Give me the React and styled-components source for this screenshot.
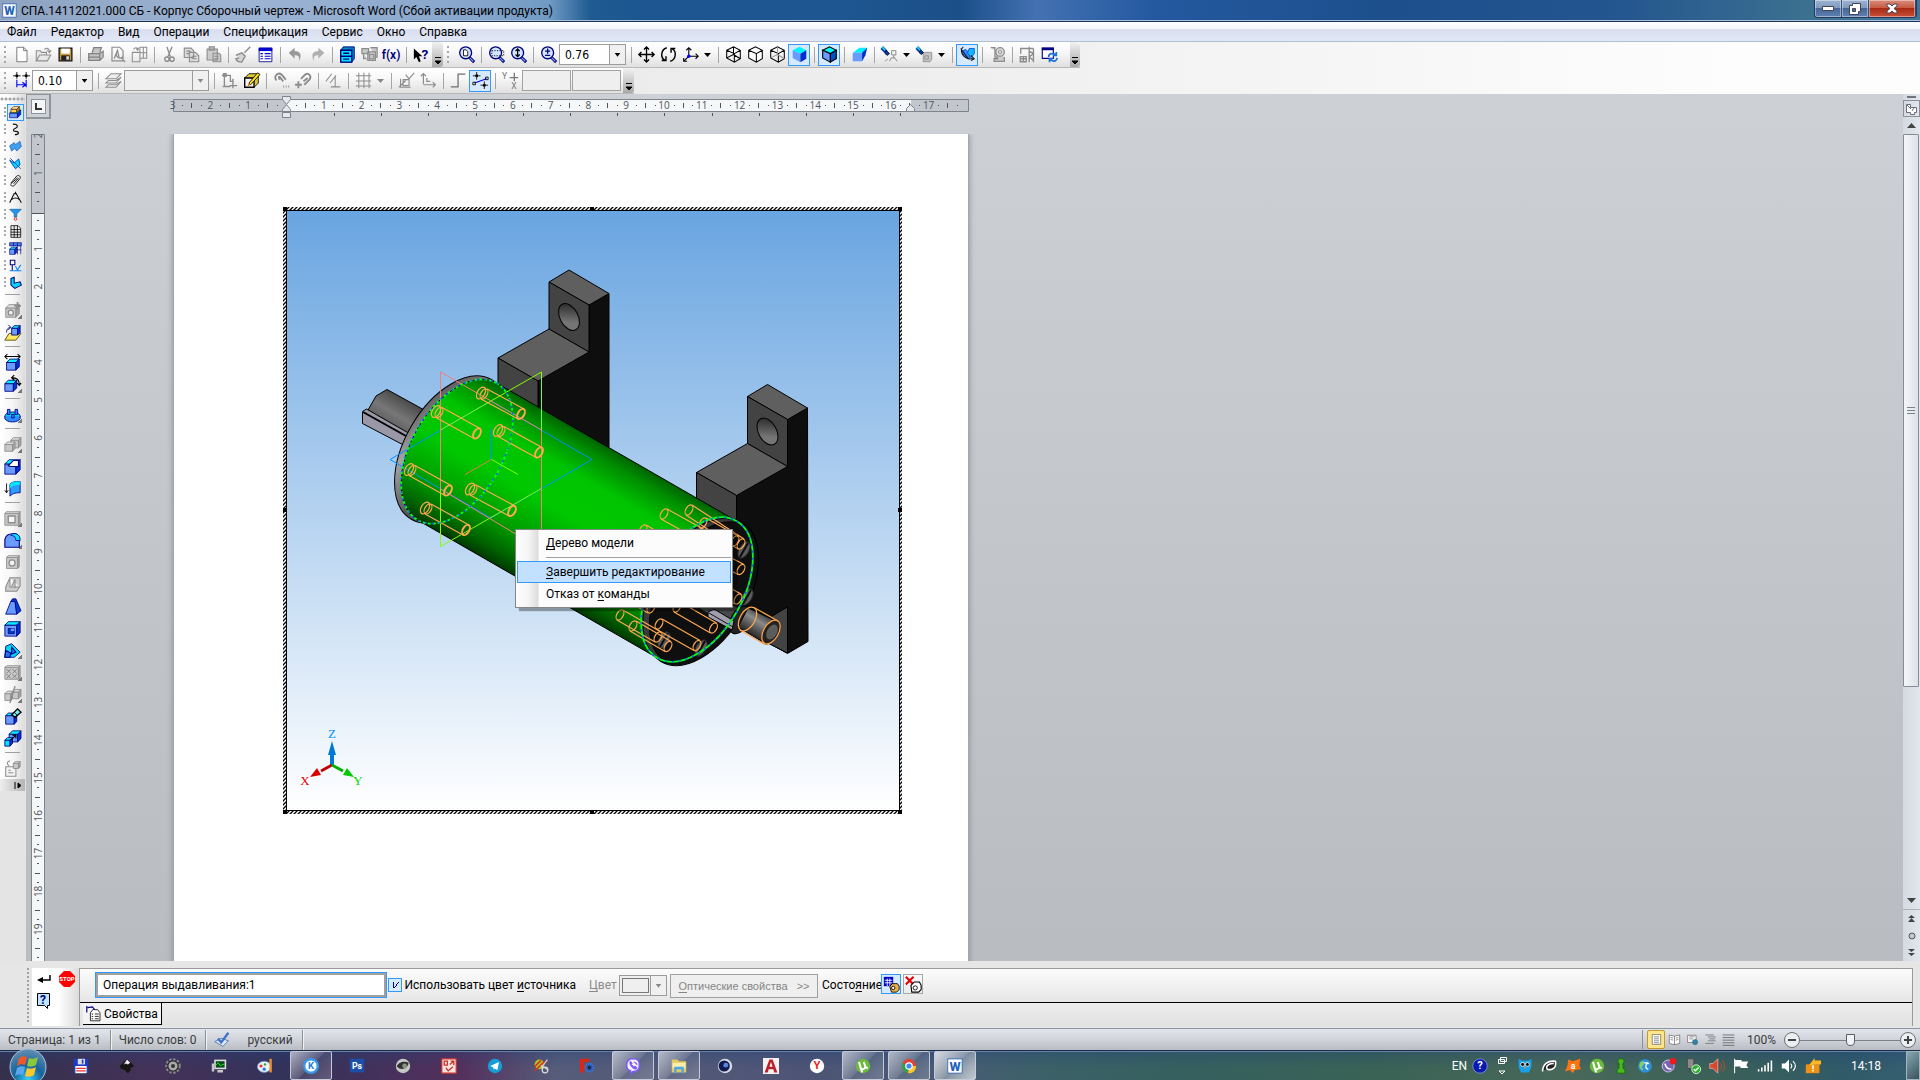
import React from "react";
import styled, { createGlobalStyle, css } from "styled-components";

const GlobalStyle = createGlobalStyle`
  * { box-sizing: border-box; }
  html, body { margin: 0; padding: 0; }
  body {
    font-family: Roboto, "Open Sans", "Noto Sans", sans-serif;
    font-size: 12px;
    color: #000;
    overflow: hidden;
  }
  button, input, select { font: inherit; color: inherit; margin: 0; padding: 0; }
  svg { display: block; flex: none; }
  u { text-underline-offset: 2px; text-decoration-skip-ink: none; }
`;

const Window = styled.div`
  display: flex;
  flex-direction: column;
  width: 100%;
  height: 100vh;
  overflow: hidden;
  background: #e4e4e4;
`;

const TitleBar = styled.header`
  display: flex;
  flex: none;
  align-items: flex-start;
  height: 22px;
  padding: 0 3px 0 2px;
  border-bottom: 1px solid #1d3558;
  box-shadow: inset 0 -1px #a9c0dc;
  background:
    linear-gradient(90deg, #8ea3c2 0, #9db4d4 250px, #86a5cb 480px, #6f9ac4 550px, #1f5b92 590px, transparent 640px),
    linear-gradient(90deg, #1a568f 0, #1d5690 44%, #1b4f88 50%, #4471b2 54%, #2459a0 60%, #1c4f8c 72%, #23558f 84%, #3c7090 94%, #41769a 100%);
`;
const Title = styled.h1`
  flex: 1;
  margin: 0 0 0 4px;
  font-size: 12px;
  font-weight: 400;
  line-height: 22px;
  white-space: nowrap;
`;
const TitleIcon = styled.div`
  padding-top: 3px;
`;
const WindowButtons = styled.div`
  display: flex;
  height: 18px;
  border: 1px solid #23395b;
  border-top: 0;
  border-radius: 0 0 4px 4px;
  overflow: hidden;
`;
const WindowButton = styled.button`
  display: flex;
  align-items: center;
  justify-content: center;
  width: ${(p) => (p.$close ? 47 : 27)}px;
  border: 0;
  border-right: 1px solid #334d75;
  box-shadow: inset 0 0 0 1px #ffffff66;
  background: ${(p) =>
    p.$close
      ? "linear-gradient(#d98d7c, #c75a43 45%, #a92a12 50%, #c8503a)"
      : "linear-gradient(#9db4d2, #7f9bc0 45%, #46669a 50%, #5f81b2)"};
`;

const MenuBar = styled.nav`
  display: flex;
  flex: none;
  align-items: center;
  height: 20px;
  border-bottom: 1px solid #b2bcd2;
  background: linear-gradient(#fff, #f3f5fa 35%, #d9dff0 40%, #e2e7f5);
`;
const MenuButton = styled.button`
  padding: 0 7px;
  border: 0;
  background: none;
  line-height: 18px;
`;

const ToolDock = styled.div`
  flex: none;
  height: 52px;
  background: linear-gradient(90deg, #e6e6e6, #efefef 50%, #fdfdfd 90%);
`;
const ToolLine = styled.div`
  display: flex;
  height: 26px;
`;
const ToolBar = styled.div`
  display: flex;
  align-items: center;
  height: 26px;
  border-bottom: 1px solid #b9b9b9;
  background: linear-gradient(#fff, #f8f8f8 40%, #e0e0e0);
`;
const Grip = styled.span`
  width: 12px;
  height: 18px;
  border-left: 4px solid transparent;
  background: repeating-linear-gradient(#a8a8a8 0 2px, transparent 2px 5px) 0 0 / 2px 18px no-repeat;
`;
const ShortGrip = styled(Grip)`
  width: 10px;
`;
const ToolButton = styled.button`
  display: flex;
  flex: none;
  align-items: center;
  justify-content: center;
  gap: 5px;
  width: ${(p) => (p.$drop ? 35 : 22)}px;
  height: 22px;
  border: 1px solid ${(p) => (p.$active ? "#3399ff" : "transparent")};
  background: ${(p) => (p.$active ? "#d6eaff" : "none")};
`;
const Divider = styled.span`
  flex: none;
  width: 8px;
  height: 16px;
  background: linear-gradient(#a5a5a5, #a5a5a5) 4px 0 / 1px 16px no-repeat;
`;
const Overflow = styled.button`
  display: flex;
  align-items: flex-end;
  justify-content: center;
  width: ${(p) => p.$w || 10}px;
  height: 25px;
  margin-left: ${(p) => p.$gap || 0}px;
  padding-bottom: 2px;
  border: 0;
  border-radius: 0 3px 3px 0;
  background: linear-gradient(#f2f2f2, #a8a8a8);
`;

const Combo = styled.span`
  display: grid;
  grid-template-columns: 1fr 16px;
  width: ${(p) => p.$w}px;
  height: 21px;
  margin: 0 1px 0 0;
  border: 1px solid #9c9c9c;
  background: ${(p) => (p.$off ? "#efefef" : "#fff")};
  color: ${(p) => (p.$off ? "#8a8a8a" : "#000")};
  svg {
    grid-area: 1 / 2;
    align-self: stretch;
    width: 16px;
    height: 19px;
    border-left: 1px solid #9c9c9c;
    background: #f0f0f0;
    pointer-events: none;
  }
`;
const ComboSelect = styled.select`
  grid-area: 1 / 1 / 2 / 3;
  appearance: none;
  width: 100%;
  padding-left: 5px;
  border: 0;
  background: none;
  font-family: "DejaVu Sans Condensed", "DejaVu Sans", sans-serif;
  font-size: 12px;
  &:disabled { opacity: 1; }
`;
const CoordInput = styled.input`
  width: 49px;
  height: 21px;
  margin-left: 1px;
  border: 1px solid #a2a2a2;
  background: #efefef;
`;

const Workspace = styled.div`
  display: flex;
  flex: 1;
  min-height: 0;
`;
const SideDock = styled.aside`
  width: 26px;
  flex: none;
  background: #e4e4e4;
`;
const SideBar = styled.div`
  width: 25px;
  padding-top: 10px;
  border-radius: 0 0 4px 0;
  background:
    radial-gradient(circle, #a8a8a8 1px, transparent 2px) 4px 3px / 4px 4px repeat-x,
    linear-gradient(90deg, #fff, #f6f6f6 50%, #dcdcdc);
`;
const SmallRow = styled.div`
  display: flex;
  align-items: center;
  height: 17px;
  padding-left: 4px;
`;
const DotGrip = styled.span`
  width: 3px;
  height: 12px;
  background: repeating-linear-gradient(#a8a8a8 0 2px, transparent 2px 4px) 0 0 / 2px 12px no-repeat;
`;
const SmallButton = styled.button`
  display: flex;
  align-items: center;
  justify-content: center;
  width: 17px;
  height: 17px;
  border: 1px solid ${(p) => (p.$active ? "#3399ff" : "transparent")};
  background: ${(p) => (p.$active ? "#d6eaff" : "none")};
`;
const LargeButton = styled.button`
  display: flex;
  align-items: center;
  justify-content: center;
  width: 25px;
  height: 22px;
  border: 0;
  background: ${(p) =>
    p.$more ? "linear-gradient(135deg, transparent 50%, #777 50%) 18px 16px / 4px 4px no-repeat" : "none"};
`;
const SideDivider = styled.div`
  height: 8px;
  margin: 0 5px;
  background: linear-gradient(#a0a0a0, #a0a0a0) 0 3px / 100% 1px no-repeat;
`;
const SideMore = styled.button`
  display: flex;
  align-items: center;
  justify-content: flex-end;
  width: 25px;
  height: 12px;
  padding-right: 3px;
  border: 0;
  background: linear-gradient(90deg, #eee, #b4b4b4);
`;

const Document = styled.main`
  display: grid;
  flex: 1;
  grid-template-columns: 25px 1fr;
  grid-template-rows: 40px 1fr;
  min-width: 0;
  overflow: hidden;
  background: linear-gradient(#cdd0d5, #b9bcc1);
`;
const TabWell = styled.button`
  align-self: start;
  display: flex;
  align-items: center;
  justify-content: center;
  width: 25px;
  height: 25px;
  border: 2px solid #8f939a;
  border-left-width: 1px;
  border-top-width: 1px;
  background: #cdd1d6;
`;
const TabStop = styled.span`
  display: flex;
  align-items: center;
  justify-content: center;
  width: 15px;
  height: 15px;
  border: 1px solid #8f939a;
  background: #f4f6f8;
`;
const TopRuler = styled.div`
  padding: 2px 0 0 115px;
`;
const LeftRuler = styled.div`
  padding-left: 5px;
  overflow: hidden;
`;
const PageHolder = styled.div`
  padding-left: 122px;
  overflow: hidden;
`;
const Page = styled.article`
  width: 796px;
  height: 1124px;
  padding: 73px 0 0 109px;
  border: 1px solid #a2a6ad;
  border-width: 0 1px;
  background: #fff;
  box-shadow: 0 0 6px #8a8e95;
`;
const ModelFrame = styled.div`
  position: relative;
  width: 619px;
  height: 607px;
`;

const ContextMenu = styled.ul`
  position: absolute;
  left: 232px;
  top: 322px;
  width: 218px;
  margin: 0;
  padding: 2px 1px;
  list-style: none;
  border: 1px solid #868686;
  background: linear-gradient(90deg, #fcfcfc, #f6f6f6 12px, #dcdcdc 22px, #fcfcfc 23px);
  box-shadow: 4px 3px 1px #00000055;
`;
const ContextButton = styled.button`
  display: block;
  width: 100%;
  height: 22px;
  padding-left: 28px;
  text-align: left;
  border: 1px solid ${(p) => (p.$active ? "#3399ff" : "transparent")};
  background: ${(p) => (p.$active ? "#c2e0ff" : "none")};
`;
const ContextLine = styled.li`
  height: 7px;
  margin-left: 29px;
  background: linear-gradient(#a0a0a0, #a0a0a0) 0 3px / 100% 1px no-repeat;
`;

const ScrollBar = styled.div`
  display: flex;
  flex: none;
  flex-direction: column;
  align-items: stretch;
  width: 17px;
  background: linear-gradient(90deg, #d5d9e0, #e2e6ee);
`;
const ScrollButton = styled.button`
  display: flex;
  align-items: center;
  justify-content: center;
  height: ${(p) => p.$h || 17}px;
  border: ${(p) => (p.$framed ? "1px solid #8b919b" : "0")};
  background: none;
`;
const Splitter = styled.div`
  height: 6px;
  background: linear-gradient(#70757d, #70757d) 4px 2px / 9px 2px no-repeat;
`;
const ScrollTrack = styled.div`
  flex: 1;
`;
const ScrollThumb = styled.div`
  display: flex;
  align-items: center;
  justify-content: center;
  height: 73%;
  width: 16px;
  border: 1px solid #868c96;
  border-radius: 1px;
  background: linear-gradient(90deg, #f4f6f9, #dde1e8);
`;
const BrowseGroup = styled.div`
  display: flex;
  flex-direction: column;
  border-top: 1px solid #adb2bb;
`;

const PropertyDock = styled.section`
  display: flex;
  flex: none;
  height: 67px;
  padding: 7px 7px 2px 27px;
  background: #e6e6e6;
`;
const PropertyGrip = styled.span`
  width: 5px;
  height: 55px;
  background: repeating-linear-gradient(#a0a0a0 0 2px, transparent 2px 4px) 0 0 / 2px 54px no-repeat;
`;
const PropertyActions = styled.div`
  display: grid;
  grid-template-columns: 23px 23px;
  grid-template-rows: 22px 22px;
  align-content: start;
  width: 47px;
  background: linear-gradient(90deg, #fff 55%, #dcdcdc);
`;
const BareButton = styled.button`
  display: flex;
  align-items: center;
  justify-content: center;
  border: 0;
  background: none;
`;
const PropertyPanel = styled.div`
  display: flex;
  flex: 1;
  flex-direction: column;
  border: 1px solid #9a9a9a;
  border-width: 1px 1px 0 1px;
  background: linear-gradient(#fcfcfc, #e2e2e2);
`;
const PropertyForm = styled.form`
  display: flex;
  align-items: flex-start;
  height: 34px;
  padding: 4px 0 0 16px;
  border-bottom: 1px solid #000;
  background: linear-gradient(#fcfcfc, #e6e6e6);
`;
const NameInput = styled.input`
  width: 290px;
  height: 24px;
  padding-left: 5px;
  border: 2px solid #a0a0a0;
  outline: 1px solid #3399ff;
  background: #fff;
`;
const CheckLabel = styled.label`
  display: flex;
  align-items: center;
  gap: 3px;
  width: 188px;
  height: 24px;
  margin-left: 2px;
  white-space: nowrap;
`;
const Check = styled.input`
  appearance: none;
  width: 14px;
  height: 14px;
  border: 1px solid #3399ff;
  background: #d6eaff;
  &:checked {
    background:
      linear-gradient(125deg, transparent 46%, #00008b 46% 54%, transparent 54%) 5px 2px / 5px 8px no-repeat,
      linear-gradient(#00008b, #00008b) 4px 3px / 1px 6px no-repeat,
      #d6eaff;
  }
`;
const ColorLabel = styled.label`
  display: flex;
  align-items: center;
  justify-content: space-between;
  width: 79px;
  height: 24px;
  margin-left: 13px;
  color: #8a8a8a;
`;
const ColorCombo = styled(Combo)`
  background: linear-gradient(#777, #777) 2px 2px / 27px 15px no-repeat,
    #efefef;
  select {
    margin: 3px 0 0 3px;
    width: 25px;
    height: 13px;
    background: #efefef;
  }
`;
const OpticsButton = styled.button`
  height: 24px;
  width: 148px;
  margin: 1px 4px 0 2px;
  border: 1px solid #a0a0a0;
  background: #efefef;
  color: #858585;
  font-size: 11px;
  font-family: "Liberation Sans", Arial, sans-serif;
  white-space: pre;
`;
const StateLabel = styled.span`
  width: 59px;
  line-height: 24px;
`;
const StateButton = styled(ToolButton)`
  width: 20px;
  height: 20px;
  margin: 1px 2px 0 0;
  border-color: ${(p) => (p.$active ? "#3399ff" : "#a8a8a8")};
`;
const PropertyTab = styled.button`
  display: flex;
  align-items: center;
  gap: 2px;
  width: 79px;
  height: 22px;
  margin-left: 3px;
  padding-left: 3px;
  border: 0;
  border-right: 1px solid #000;
  border-bottom: 1px solid #000;
  background: #f4f4f4;
`;

const StatusBar = styled.footer`
  display: flex;
  flex: none;
  align-items: center;
  height: 22px;
  border-top: 1px solid #8a94a3;
  background: linear-gradient(#e2e5ea, #d0d4da 50%, #b9bdc3);
  color: #3b3b3b;
`;
const StatusItem = styled.span`
  display: flex;
  align-items: center;
  height: 20px;
  gap: 17px;
  padding: 0 9px 0 8px;
  border-right: 1px solid #8b9097;
  box-shadow: 1px 0 #f2f3f5;
  white-space: nowrap;
`;
const ViewTools = styled.div`
  display: flex;
  align-items: center;
  margin-left: auto;
  padding: 0 4px 0 4px;
  border-left: 1px solid #8b9097;
`;
const ViewButton = styled.button`
  display: flex;
  align-items: center;
  justify-content: center;
  width: 18px;
  height: 19px;
  border: 1px solid ${(p) => (p.$active ? "#c29b29" : "transparent")};
  border-radius: 2px;
  background: ${(p) => (p.$active ? "#fde58c" : "none")};
`;
const ZoomText = styled.span`
  width: 45px;
  padding-right: 8px;
  margin-left: 2px;
  text-align: right;
`;
const RoundButton = styled.button`
  display: flex;
  align-items: center;
  justify-content: center;
  width: 16px;
  height: 16px;
  border: 1px solid #6a6f76;
  border-radius: 8px;
  background: #eceef1;
`;
const ZoomSlider = styled.input`
  appearance: none;
  width: 100px;
  height: 14px;
  background: linear-gradient(#7c828a, #7c828a) 0 7px / 100% 1px no-repeat;
  &::-webkit-slider-thumb {
    appearance: none;
    width: 9px;
    height: 12px;
    border: 1px solid #5a6068;
    border-radius: 1px 1px 5px 5px;
    background: #f2f3f5;
  }
`;

const TaskBar = styled.div`
  display: flex;
  flex: none;
  align-items: center;
  height: 30px;
  border-top: 1px solid #1c2c48;
  box-shadow: inset 0 1px #6580a8;
  background:
    linear-gradient(#1f3f7855, transparent 60%),
    linear-gradient(90deg, #34304c 0, #453258 8%, #33325a 15%, #54305c 24%, #565d7a 29%, #4d5475 42%, #475c74 50%, #3c6168 54%, #35605e 62%, #3a6355 72%, #48685a 82%, #3a6058 90%, #305a68 96%, #375f70 100%);
`;
const StartButton = styled.button`
  width: 60px;
  height: 36px;
  padding-left: 9px;
  border: 0;
  background: none;
`;
const TaskList = styled.div`
  display: flex;
  flex: 1;
  gap: 4px;
`;
const openTask = css`
  border-color: #c4cad8;
  background: linear-gradient(135deg, #ffffff99, #ffffff33 50%, #ffffff1a 52%, #ffffff33);
`;
const TaskButton = styled.button`
  display: flex;
  align-items: center;
  justify-content: center;
  width: 42px;
  height: 29px;
  border: 1px solid transparent;
  border-radius: 2px;
  background: none;
  ${(p) => p.$open && openTask}
  ${(p) => p.$front && "background: linear-gradient(135deg, #ffffffcc, #ffffff66 50%, #ffffff55 52%, #ffffffaa);"}
`;
const Tray = styled.div`
  display: flex;
  align-items: center;
  gap: 4px;
  color: #fff;
`;
const TrayText = styled.span`
  padding-right: ${(p) => (p.$clock ? 21 : 0)}px;
  padding-left: ${(p) => (p.$clock ? 24 : 0)}px;
  line-height: 26px;
`;
const TrayButton = styled(BareButton)`
  width: ${(p) => (p.$tight ? 18 : 20)}px;
  height: 24px;
`;
const ShowDesktop = styled.button`
  width: 14px;
  height: 29px;
  border: 1px solid #9fb6bd;
  background: linear-gradient(135deg, #8ba7b0, #35525e);
`;

/* ---------- icons ---------- */

const NAVY = "#000080";
const GREY = "#8c8c8c";
const blue = { f: "#6a9cff", t: "#00f0ff", s: "#0033d6", o: NAVY };
const dull = { f: "#c8c8c8", t: "#dcdcdc", s: "#a4a4a4", o: GREY };
const gold = { f: "#ffd24a", t: "#ffe9a0", s: "#d58a00", o: "#402000" };

function Box({ x, y, w, h, d = 4, c = blue }) {
  return (
    <g stroke={c.o} strokeLinejoin="round">
      <path fill={c.f} d={`M${x} ${y}h${w}v${h}h${-w}z`} />
      <path fill={c.t} d={`M${x} ${y}l${d} ${-d}h${w}l${-d} ${d}z`} />
      <path fill={c.s} d={`M${x + w} ${y}l${d} ${-d}v${h}l${-d} ${d}z`} />
    </g>
  );
}

function Lens({ children }) {
  return (
    <>
      <path d="M13 13l6 6" stroke={NAVY} strokeWidth="3.500" />
      <path d="M13 13l5 5" stroke="#8db4ff" strokeWidth="1.200" />
      <circle cx="9" cy="8" r="7" fill="#d4e6ff" stroke={NAVY} strokeWidth="1.600" />
      {children}
    </>
  );
}

const wire = "M2 5l8-4 8 4v10l-7 4-9-5z";
const wireTop = "M2 5l9 4v10M11 9l7-4";
const wireBack = "M10 1v9M10 10l8 5M10 10l-8 4";

const icons = {
  new: <path d="M4.500 1.500h8l4 4v13h-12zM12.500 1.500v4h4" fill="#fff" stroke="#666" />,
  open: <path d="M1.500 17.500v-12h5l1 2h6v3M1.500 17.500l4-7h13l-4 7zM11 4c3-3 6-1 6 3M14 5l3 3 2-3" fill="#e8e8e8" stroke={GREY} strokeWidth="1.200" />,
  save: (
    <>
      <path d="M2.500 2.500h15v15h-15z" fill="#c89a3c" stroke="#111" strokeWidth="1.500" />
      <path d="M5 3h10v6H5z" fill="#fff" />
      <path d="M5 11h10v6H5z" fill="#222" />
      <path d="M11 12h3v4h-3z" fill="#ddd" />
    </>
  ),
  print: <path d="M6 8l2-6h9l-2 6M2 9h13l4-3v7l-4 4H2zM2 13h13M15 9v8" fill="#c4c4c4" stroke="#808080" strokeWidth="1.400" />,
  preview: <path d="M3.500 1.500h9l4 4v12h-13zM6 15l4-10 2 9M9 9a4 4 0 108 2M15 14l4 5" fill="none" stroke={GREY} strokeWidth="1.400" />,
  sheets: <path d="M1.500 7.500h9v11h-9zM10.500 1.500h8v13h-8zM14.500 2v12M11 8h7M3 4c2-3 5-2 5 0M6 3l2 2 1-3" fill="none" stroke={GREY} strokeWidth="1.200" />,
  cut: <path d="M7 1l4 12M13 1L8 13M7 13a2.500 2.500 0 100 5 2.500 2.500 0 000-5M13 13a2.500 2.500 0 100 5 2.500 2.500 0 000-5" fill="none" stroke={GREY} strokeWidth="1.600" />,
  copy: <path d="M1.500 2.500h8l3 3v8h-11zM7.500 7.500h7l4 4v7h-11zM4 6h5M4 9h3M10 12h6M10 15h6" fill="#ddd" stroke={GREY} strokeWidth="1.300" />,
  paste: <path d="M2.500 3.500h12v13h-12zM5 1h6v4H5zM9.500 8.500h7l2 2v8h-9zM11 12h5M11 15h5" fill="#ccc" stroke={GREY} strokeWidth="1.300" />,
  brush: <path d="M18 1l-7 7M1 11l7-3 4 4-4 7c-3 0-6-1-7-4l4-1M8 8l4 4" fill="#d4d4d4" stroke={GREY} strokeWidth="1.600" />,
  list: (
    <>
      <path d="M2.500 2.500h15v16h-15z" fill="#fff" stroke={NAVY} />
      <path d="M2 2h16v4H2z" fill="#0000d0" />
      <path d="M4 9h3M9 9h7M4 12h3M9 12h7M4 15h3M9 15h7" stroke="#0000d0" strokeWidth="1.300" />
    </>
  ),
  undo: <path d="M2 8l7-6v4c7 0 9 5 5 12 1-6-1-7-5-7v4z" fill="#9a9a9a" />,
  redo: <path d="M18 8l-7-6v4c-7 0-9 5-5 12-1-6 1-7 5-7v4z" fill="#b0b0b0" />,
  cabinet: (
    <>
      <path d="M2 5l3-4h13v14l-3 4H2z" fill="#0080c0" stroke={NAVY} />
      <path d="M2 5h13v14H2zM2 12h13" fill="#00e5ff" stroke={NAVY} strokeWidth="1.600" />
      <path d="M5 8.500h7M5 15.500h7" stroke={NAVY} strokeWidth="1.600" />
    </>
  ),
  parts: <path d="M1 3h8v6H1zM3 9v6h4M8 7h9v10H8zM10 10h5v5h-5zM11 2h8v11h-2" fill="#c8c8c8" stroke={GREY} strokeWidth="1.400" />,
  help: (
    <>
      <path d="M1 3v13l3-3 3 6 2-1-2-6h4z" fill="#000" />
      <text x="10" y="15" fontSize="16" fontWeight="700" fill={NAVY}>?</text>
    </>
  ),
  zoomPage: <Lens><path d="M6.500 4.500h3l2 2v5h-5z" fill="#fff" stroke="#000" /></Lens>,
  zoomArea: <Lens><path d="M4.500 5.500h14v6h-14z" fill="none" stroke="#000" strokeDasharray="1.500 1.500" /></Lens>,
  zoomUp: <Lens><path d="M9 4v8M6.500 6L9 3.500 11.500 6M6.500 10L9 12.500l2.500-2.500" fill="none" stroke="#000" strokeWidth="1.500" /></Lens>,
  zoomIn: <Lens><path d="M9 3v6M6 6h6M6 11h6" stroke={NAVY} strokeWidth="1.500" /></Lens>,
  move: <path d="M10 1v18M1 10h18M7 4l3-3 3 3M7 16l3 3 3-3M4 7l-3 3 3 3M16 7l3 3-3 3" fill="none" stroke="#000" strokeWidth="1.600" />,
  rotate: <path d="M8 2c-7 2-8 12-2 15M2 17h5v-5M12 18c7-2 8-12 2-15M18 3h-5v5" fill="none" stroke="#000" strokeWidth="1.700" />,
  axes: (
    <>
      <path d="M8 12V2M5 5l3-3 3 3M8 12h11M16 9l3 3-3 3M8 12l-6 6M2 14v4h4" fill="none" stroke="#000" strokeWidth="1.300" />
      <circle cx="8" cy="12" r="2" fill="#00f" />
    </>
  ),
  wire1: <path d={wire + wireTop + wireBack} fill="none" stroke="#000" strokeWidth="1.200" />,
  wire2: <path d={wire + wireTop} fill="#fff" stroke="#000" strokeWidth="1.200" />,
  wire3: (
    <g fill="none" strokeWidth="1.200">
      <path d={wire + wireTop} stroke="#000" />
      <path d={wireBack} stroke="#999" />
    </g>
  ),
  solid: (
    <>
      <path d="M2 5l8-4 8 4-7 4z" fill="#00f6ff" />
      <path d="M2 5l9 4v10l-9-5z" fill="#6a9cff" />
      <path d="M11 9l7-4v10l-7 4z" fill="#0030d0" />
    </>
  ),
  solidEdge: (
    <g stroke="#000" strokeWidth="1.300">
      <path d="M2 5l8-4 8 4-7 4z" fill="#00f6ff" />
      <path d="M2 5l9 4v10l-9-5z" fill="#6a9cff" />
      <path d="M11 9l7-4v10l-7 4z" fill="#0050c0" />
    </g>
  ),
  wedge: (
    <>
      <path d="M2 8l8-6h9l-6 6z" fill="#00f0ff" />
      <path d="M2 8h11v10H2z" fill="#6a9cff" />
      <path d="M13 8l6-6-2 9-4 7z" fill="#0030d0" />
    </>
  ),
  torch: (
    <>
      <path d="M1 2l5 5" stroke="#003c9c" strokeWidth="4.500" />
      <path d="M6 5l4 4-3 2-2-2z" fill="#003c9c" stroke="#003" />
      <path d="M1 1l4 4" stroke="#22d3ff" strokeWidth="2" />
      <path d="M12.500 5.500h5v5h-5zM15 11v3M10 18l2-4h4l3 4M8 15l-3 3" fill="none" stroke="#777" />
    </>
  ),
  torch2: (
    <>
      <path d="M1 2l4 4" stroke="#003c9c" strokeWidth="4.500" />
      <path d="M5 4l4 4-3 2-2-2z" fill="#003c9c" stroke="#003" />
      <path d="M1 1l4 4" stroke="#22d3ff" strokeWidth="2" />
      <path d="M8.500 9.500l2-2h8v8l-2 3h-8zM10.500 11.500h4v4h-4z" fill="#c4c4c4" stroke={GREY} />
    </>
  ),
  section: (
    <>
      <path d="M3 6l5-2 5 5-1 6-5-2z" fill="#2d8cff" stroke="#0b4cc0" />
      <path d="M10 8l2-5h6v6l-4 5z" fill="#12b8ff" stroke="#0b4cc0" />
      <path d="M5 1c-7 6 4 18 12 13M2 3l9 12M14 11l4 4-4 2" fill="none" stroke="#111" strokeWidth="1.200" />
    </>
  ),
  measure: (
    <>
      <path d="M2 2h5v11h3v2H6v3h12v-5" fill="#ccc" stroke={GREY} strokeWidth="1.500" />
      <circle cx="13" cy="7" r="5" fill="#ddd" stroke={GREY} strokeWidth="1.500" />
      <circle cx="13" cy="7" r="2" fill="none" stroke={GREY} />
    </>
  ),
  crane: <path d="M2 9V3h15M12 1v18M17 3v16M12 6l5 3-5 4 5 4M1.500 12.500h7v6h-7zM5 13v5M2 15h6" fill="none" stroke={GREY} strokeWidth="1.600" />,
  refresh: (
    <>
      <path d="M1.500 2.500h13v12h-13z" fill="#fff" stroke={NAVY} strokeWidth="1.300" />
      <path d="M1 2h14v3H1z" fill={NAVY} />
      <path d="M9 13c0-5 6-5 9-2M18 7v4h-4M19 14c-1 5-6 5-9 1M10 19v-4h4" fill="none" stroke="#1d6fe0" strokeWidth="2" />
    </>
  ),
  step: (
    <>
      <path d="M4.500 9v9M15.500 9v9M5 15h10M11 12l4 3-4 3" fill="none" stroke="#00f" strokeWidth="1.300" />
      <path d="M4.500 0v8M0 4.500h9M15.500 0v8M11 4.500h9" stroke="#000" />
      <path d="M3 3h3v3H3zM14 3h3v3h-3z" />
    </>
  ),
  layers: <path d="M1 8l6-6h12l-6 6zM1 13l3-3h9l6-4-6 7zM1 18l3-3h9l6-4-6 7z" fill="#eee" stroke={GREY} strokeWidth="1.200" />,
  frame: <path d="M4 2v16M1 4h6M14 8v11M10 16h9M6 4h5v7h4M2 17h9M3 2h3v3H3z" fill="none" stroke={GREY} strokeWidth="1.600" />,
  cubePen: (
    <>
      <path d="M2 7l5-5h11v11l-5 5H2z" fill="#d9c63c" stroke="#000" />
      <path d="M2 7h11v11H2z" fill="#f4f4f4" stroke="#000" strokeWidth="1.600" />
      <path d="M7 13L17 1l3 2L9 15z" fill="#ffe000" stroke="#000" />
      <path d="M7 13l-2 4 4-2z" fill="#e06000" />
    </>
  ),
  magnet: <path d="M4 10C0 4 7-1 11 4l4 5M8 9C6 6 7 4 9 7l3 4M12 17h1M15 17h1M18 17h1" fill="none" stroke={GREY} strokeWidth="2.200" />,
  magnet2: <path d="M7 8l5-5c4-3 8 2 5 6l-6 6M10 11l5-4M4 11v8M0 15h8" fill="none" stroke={GREY} strokeWidth="2.200" />,
  parallel: <path d="M1 11l7-9M6 13l7-9M12 4v13M7 17.500h11" fill="none" stroke={GREY} strokeWidth="1.200" />,
  grid: <path d="M4.500 1v18M10.500 1v18M16.500 1v18M1 4.500h18M1 10.500h18M1 16.500h18" stroke={GREY} strokeWidth="1.200" />,
  sketchOk: <path d="M3 8v10h12M1 18l8-8M6 9h7v7H6zM9 3l4 5 6-7" fill="none" stroke={GREY} strokeWidth="1.300" />,
  lcs: <path d="M4 14V2M1 5l3-3 3 3M4 15h14M15 12l3 3-3 3M8 7v4h4" fill="none" stroke={GREY} strokeWidth="1.400" />,
  corner: <path d="M1 17.500h8.500v-15H18" fill="none" stroke="#707070" strokeWidth="1.500" />,
  snap: (
    <>
      <path d="M3 13l14-5" stroke="#00f" strokeWidth="1.300" />
      <path d="M5.500 0v9M1 4.500h9M14.500 11v9M10 15.500h9M1 12h3v3H1zM16 6h3v3h-3z" fill="none" stroke="#000" />
      <path d="M4 3h3v3H4zM13 14h3v3h-3z" />
    </>
  ),
  xy: (
    <>
      <text x="0" y="8" fontSize="10" fill="#777">Y</text>
      <text x="11" y="20" fontSize="10" fill="#777">X</text>
      <path d="M14.500 1v10M9 6.500h10" stroke="#777" strokeWidth="1.500" />
    </>
  ),
};

const sideSmall = [
  <><Box x={1} y={11} w={12} h={7} d={5} c={blue} /><Box x={3} y={5} w={9} h={5} d={4} c={gold} /></>,
  <path d="M6 2c7-1 9 4 4 6s-4 5 1 5 5 5-2 5" fill="none" stroke="#111" strokeWidth="1.800" />,
  <path d="M1 9l7-5 2 3 7-5 2 8-7 7-3-4-5 4z" fill="#3f9ff0" stroke="#1558b8" />,
  <path d="M1 5l7 4 7-6 2 9-7 6-5-7zM2 2l16 16" fill="#00d8ff" stroke="#0038b8" strokeWidth="1.300" />,
  <path d="M3 14L12 3c3-2 7 1 5 4L8 18c-4 2-7-1-4-4l9-8M7 15l8-9" fill="none" stroke="#222" strokeWidth="1.500" />,
  <path d="M10 1v3M8 4h3l8 14M8 4L1 18M4 13c4-3 8-3 12 0" fill="none" stroke="#111" strokeWidth="1.700" />,
  <><path d="M1 2h18l-7 7v5H8V9z" fill="#2196e8" stroke="#0b5ca8" /><circle cx="10" cy="17" r="2" fill="none" stroke="#e33" strokeWidth="1.500" /></>,
  <path d="M3 1h11l4 4v14H3zM3 7h15M3 11h15M3 15h15M8 1v18M13 1v18" fill="#eee" stroke="#000" strokeWidth="1.200" />,
  <><path d="M1 1h18v5H1zM7 1v5M13 1v18M18 6v13M8 12h11" fill="#4a7be0" stroke={NAVY} /><Box x={1} y={11} w={8} h={8} d={3} /></>,
  <><path d="M2 2h7v7H2zM5 9v9" fill="#fff" stroke="#000080" strokeWidth="1.600" /><path d="M1 18h18M10 11l3 6 5-8" fill="none" stroke="#0080ff" strokeWidth="1.600" /></>,
  <path d="M3 4l5-2v9l9-2 2 5-10 5-6-5z" fill="#00d8f0" stroke={NAVY} strokeWidth="1.600" />,
];

const sideLarge = [
  { id: "boxAdd", more: 1, art: <><Box x={2} y={7} w={12} h={11} c={dull} /><circle cx="8" cy="12.500" r="3" fill="#eee" stroke={GREY} strokeWidth="1.500" /><path d="M16 0v9M12 4.500h8" stroke={GREY} strokeWidth="2" /></> },
  { id: "sketch", art: <><path d="M1 19l5-8h14l-6 8z" fill="#ffe860" stroke="#4c4400" /><Box x={9} y={5} w={7} h={8} d={3} /><path d="M3 10c0-4 2-6 5-6M5 1l3 3-3 3" fill="none" stroke={NAVY} /></>, line: 1 },
  { id: "extrude", art: <><path d="M1 3h18M4 0L1 3l3 3M16 0l3 3-3 3" fill="none" stroke="#000" strokeWidth="1.200" /><Box x={3} y={10} w={11} h={9} /></> },
  { id: "revolve", more: 1, art: <><Box x={1} y={9} w={10} h={9} /><path d="M9 2c6 0 9 3 9 8M12-1L9 2l3 3M15 8l3 3 2-3" fill="none" stroke="#000" strokeWidth="1.400" /></>, line: 1 },
  { id: "flange", more: 1, art: <><ellipse cx="10" cy="12" rx="9" ry="5" fill="#00d0f0" stroke={NAVY} /><path d="M1 12v3c3 5 15 5 18 0v-3" fill="#2d8cff" stroke={NAVY} /><path d="M4 4h3v6H4zM13 4h3v6h-3zM9 10h3v4H9z" fill="#2d8cff" stroke={NAVY} /></>, line: 1 },
  { id: "union", more: 1, art: <><Box x={8} y={5} w={9} h={9} d={3} c={dull} /><Box x={1} y={10} w={9} h={8} d={3} c={dull} /></> },
  { id: "cutout", art: <><Box x={1} y={7} w={13} h={12} d={5} /><path d="M5 9l6-6h6v7H8z" fill="#fff" stroke={NAVY} strokeWidth="1.300" /></> },
  { id: "bend", art: <><path d="M7 5c4-4 8-3 12-3v13c-4 0-8 0-12 4z" fill="#2d9cff" stroke={NAVY} /><path d="M7 5c4-4 8-3 12-3v4c-4 0-8 0-12 4z" fill="#00e5ff" /><path d="M3 4v11M1 12l2 3 2-3" fill="none" stroke="#000" /></>, line: 1 },
  { id: "hole", more: 1, art: <><Box x={1} y={4} w={16} h={14} d={2} c={dull} /><path d="M5 7h8v8H5z" fill="#f4f4f4" stroke={GREY} strokeWidth="1.600" /></> },
  { id: "fillet", more: 1, art: <><path d="M1 18V9c1-5 5-7 9-7h3c4 1 5 4 5 7v9z" fill="#6a9cff" stroke={NAVY} strokeWidth="1.300" /><path d="M10 2h4c4 1 5 4 5 8h-5c0-4-2-6-6-6z" fill="#00e5ff" stroke={NAVY} /></> },
  { id: "round", art: <><Box x={3} y={4} w={13} h={13} d={2} c={dull} /><circle cx="9.500" cy="10.500" r="3.500" fill="#f4f4f4" stroke={GREY} strokeWidth="1.500" /></> },
  { id: "rib", art: <path d="M2 13l5-11h12v10l-4 6H2zM7 2v11h12M9 12l4-8v10" fill="#ccc" stroke={GREY} strokeWidth="1.200" /> },
  { id: "draft", art: <><path d="M2 19L8 4h5l2 15z" fill="#6a9cff" stroke={NAVY} /><path d="M8 4l2-3h4l6 14-5 4-2-15z" fill="#0040d0" stroke={NAVY} /></> },
  { id: "shell", art: <><Box x={1} y={6} w={14} h={13} /><path d="M5 10h7v6H5z" fill="#003cc8" stroke={NAVY} /><path d="M8 10h4v3H8z" fill="#6a9cff" /></> },
  { id: "plane", more: 1, art: <><path d="M2 5l7-3 10 10-7 6H1z" fill="#00d8f0" stroke={NAVY} /><path d="M2 10l6 3-1 5H1zM9 6l5 6-5 2z" fill="#2d6cf0" stroke={NAVY} strokeWidth="1.300" /></> },
  { id: "array", more: 1, art: <><Box x={1} y={4} w={16} h={14} d={2} c={dull} /><path d="M3 6l5 5M8 6l-5 5M10 6l5 5M15 6l-5 5M3 12l5 5M8 12l-5 5M10 12l5 5M15 12l-5 5" stroke="#777" /></> },
  { id: "mirror", more: 1, art: <><Box x={1} y={9} w={7} h={8} d={3} c={dull} /><Box x={10} y={7} w={7} h={8} d={3} c={dull} /><path d="M13 0L7 20" stroke="#888" strokeWidth="1.500" /></> },
  { id: "screw", art: <><Box x={2} y={9} w={10} h={10} d={3} /><path d="M9 8l7-7 4 4-7 6z" fill="#7de8f4" stroke="#000" strokeWidth="1.600" /><path d="M12 5l4 4" stroke="#000" /></> },
  { id: "scale", art: <><Box x={6} y={5} w={10} h={9} d={4} /><Box x={1} y={12} w={6} h={7} d={3} c={{ ...blue, f: "#00e5ff" }} /><path d="M8 12l6-6M10 6h4v4" fill="none" stroke="#000" strokeWidth="1.300" /></>, line: 1 },
  { id: "detail", art: <><path d="M2 8h12v11H2zM5 12h3M5 15h6M7 1c-4 1-4 4-1 6" fill="#f4f4f4" stroke={GREY} strokeWidth="1.200" /><Box x={11} y={4} w={6} h={6} d={2} c={dull} /></> },
];

const Icon = ({ art, size = 20 }) => (
  <svg width={size} height={size} viewBox="0 0 20 20" aria-hidden="true" overflow="visible">
    {art}
  </svg>
);

const Arrow = ({ color = "#000" }) => (
  <svg width="7" height="4" viewBox="0 0 7 4">
    <path d="M0 0h7L3.500 4z" fill={color} />
  </svg>
);

const More = () => (
  <svg width="8" height="8" viewBox="0 0 8 8">
    <path d="M1 0.500h6M1 4h6L4 7z" stroke="#000" strokeWidth="1" />
  </svg>
);

const FxText = styled.span`
  color: ${NAVY};
  font-size: 12px;
  font-weight: 600;
`;

/* "|" is a divider, a trailing "+" a drop-down, a leading "*" a pressed button */
function Tools({ items }) {
  return items.split(" ").map((raw, i) => {
    if (raw === "|") return <Divider key={i} />;
    const name = raw.replace(/[*+]/g, "");
    const drop = raw.endsWith("+");
    return (
      <ToolButton key={i} type="button" aria-label={name} $active={raw[0] === "*"} $drop={drop}>
        {name === "fx" ? <FxText>f(x)</FxText> : <Icon art={icons[name]} size={17} />}
        {drop && <Arrow color={name === "grid" ? "#888" : "#000"} />}
      </ToolButton>
    );
  });
}

function ComboBox({ value, w, off, label }) {
  return (
    <Combo $w={w} $off={off}>
      <ComboSelect aria-label={label} disabled={off} defaultValue={value}>
        <option>{value}</option>
      </ComboSelect>
      <svg viewBox="0 0 16 19">
        <path d="M5 8h6l-3 4z" fill={off ? "#888" : "#000"} />
      </svg>
    </Combo>
  );
}

/* ---------- rulers ---------- */

const CM = 37.8;
const scale = Array.from({ length: 23 }, (_, i) => i - 3);

function HorizontalRuler() {
  return (
    <svg width="820" height="34" viewBox="166 96 820 34" fontFamily="Open Sans" fontSize="10" fill="#50555c">
      <path d="M173.500 99.500h795v12h-795z" fill="#c3c7cd" stroke="#7f848c" />
      <path d="M286 100h625v11H286z" fill="#f6f7f8" />
      {scale.filter((n) => n < 18).map((n) => {
        const x = 286 + n * CM;
        return (
          <g key={n}>
            {n !== 0 && <text x={x} y="109" textAnchor="middle">{Math.abs(n)}</text>}
            {[9.5, 28.4].map((d) => x + d < 966 && <path key={d} d={`M${Math.round(x + d)} 105h1v1h-1z`} />)}
            {x + 19 < 966 && <path d={`M${Math.round(x + 18.5)} 103h1v5h-1z`} />}
          </g>
        );
      })}
      {Array.from({ length: 13 }, (_, i) => (
        <path key={i} d={`M${Math.round(334 + i * 47.2)} 113h1v3h-1z`} />
      ))}
      <g fill="#e6e8eb" stroke="#7f848c">
        <path d="M282.500 96.500h8v3l-4 5-4-5zM286.500 104.500l4 5v2h-8v-2zM282.500 112.500h8v5h-8z" />
        <path d="M910.500 104.500l4 4v3h-8v-3z" />
      </g>
    </svg>
  );
}

function VerticalRuler() {
  return (
    <svg width="15" height="840" viewBox="31 134 15 840" fontFamily="Open Sans" fontSize="10" fill="#50555c">
      <path d="M31.500 134.500h13v860h-13z" fill="#f6f7f8" stroke="#7f848c" />
      <path d="M32 135h12v78H32z" fill="#c3c7cd" />
      <path d="M32 213h12v1H32z" />
      {scale.filter((n) => n > -3).map((n) => {
        const y = 211 + n * CM;
        return (
          <g key={n}>
            {n !== 0 && (
              <text transform={`translate(42 ${y}) rotate(-90)`} textAnchor="middle">
                {Math.abs(n)}
              </text>
            )}
            <path d={`M37 ${Math.round(y + 9)}h2v1h-2zM37 ${Math.round(y + 28)}h2v1h-2zM35 ${Math.round(y + 19)}h5v1h-5z`} />
          </g>
        );
      })}
    </svg>
  );
}

/* ---------- 3D model ---------- */

const bolts = [
  [484, 394, 521, 414],
  [439, 412.5, 477, 433.5],
  [501, 431.5, 539, 452.5],
  [412, 470.5, 448, 490.5],
  [473, 490, 512, 511],
  [428, 509, 466, 530],
];
const frontBolts = [
  [664, 514, 702, 535],
  [689, 510, 741, 544],
  [703, 523, 735, 541],
  [643, 530, 680, 551],
  [700, 548, 741, 569.5],
  [700, 578, 738, 599],
  [620, 615, 658, 637],
  [633, 626, 668, 646.5],
  [659, 624, 697, 645.5],
  [677, 607, 713.5, 628],
  [620, 590, 651, 608],
];
const screws = [[744, 550], [664, 640], [701, 648], [747, 597]];

function Bolt({ b: [x1, y1, x2, y2], head }) {
  return (
    <g fill="none" stroke="#ffa850" strokeWidth="1.200">
      <ellipse cx={x1} cy={y1} rx="5.500" ry="3.200" transform={`rotate(-60 ${x1} ${y1})`} />
      {head && <ellipse cx={x1 - 3} cy={y1 - 1} rx="6.500" ry="3.800" transform={`rotate(-60 ${x1 - 3} ${y1 - 1})`} />}
      <ellipse cx={x2} cy={y2} rx="5.500" ry="3.200" transform={`rotate(-60 ${x2} ${y2})`} strokeWidth={head ? 2 : 1.2} />
      <path d={`M${x1 + 3} ${y1 - 5}L${x2 + 3} ${y2 - 5}M${x1 - 3} ${y1 + 5}L${x2 - 3} ${y2 + 5}`} />
    </g>
  );
}

const Bracket = ({ x, y, bottom }) => (
  <g transform={`translate(${x} ${y})`} stroke="#000" strokeLinejoin="round">
    <path d={bottom} fill="#0e0e0e" />
    <path d="M0 0l20-12 40 23.500-20 11.500z" fill="#5f5f5f" />
    <path d="M0 0l40 23v47L0 47z" fill="#434343" />
    <path d="M0 47l40 23-51 29-40-23z" fill="#5f5f5f" />
    <path d="M-51 76l40 23v50l-40-23z" fill="#434343" />
    <ellipse cx="20" cy="35" rx="14.500" ry="9" transform="rotate(62 20 35)" fill="url(#hole)" />
  </g>
);

function Model() {
  return (
    <svg width="619" height="607" viewBox="283 207 619 607" role="img" aria-label="Корпус">
      <defs>
        <linearGradient id="sky" x2="0" y2="1">
          <stop offset="0" stopColor="#69a5e1" />
          <stop offset="1" stopColor="#fff" />
        </linearGradient>
        <linearGradient id="body" gradientUnits="userSpaceOnUse" x1="496.5" y1="383" x2="417.5" y2="520">
          <stop offset="0" stopColor="#006400" />
          <stop offset="0.080" stopColor="#008c00" />
          <stop offset="0.250" stopColor="#00c400" />
          <stop offset="0.500" stopColor="#00c800" />
          <stop offset="0.750" stopColor="#009c00" />
          <stop offset="0.920" stopColor="#006000" />
          <stop offset="1" stopColor="#003800" />
        </linearGradient>
        <linearGradient id="rim" gradientUnits="userSpaceOnUse" x1="480" y1="372" x2="405" y2="515">
          <stop offset="0" stopColor="#333" />
          <stop offset="0.400" stopColor="#a4a4a4" />
          <stop offset="0.700" stopColor="#555" />
          <stop offset="1" stopColor="#1c1c1c" />
        </linearGradient>
        <linearGradient id="shaft" gradientUnits="userSpaceOnUse" x1="395" y1="393" x2="377" y2="424">
          <stop offset="0" stopColor="#4a4a4a" />
          <stop offset="0.500" stopColor="#777" />
          <stop offset="1" stopColor="#555" />
        </linearGradient>
        <linearGradient id="tube" gradientUnits="userSpaceOnUse" x1="765" y1="612" x2="750" y2="636">
          <stop offset="0" stopColor="#2c2c2c" />
          <stop offset="0.400" stopColor="#8a8a8a" />
          <stop offset="1" stopColor="#1c1c1c" />
        </linearGradient>
        <linearGradient id="hole" x2="0.800" y2="0.300">
          <stop offset="0" stopColor="#1e1e1e" />
          <stop offset="1" stopColor="#757575" />
        </linearGradient>
        <pattern id="hatch" width="4" height="4" patternUnits="userSpaceOnUse">
          <path d="M0 0h4v4H0z" fill="#fff" />
          <path d="M-1 5L5-1M-1 1l2-2M3 5l2-2" stroke="#000" strokeWidth="1.300" />
        </pattern>
        <clipPath id="frontFace">
          <ellipse cx="697" cy="589.5" rx="79" ry="45.600" transform="rotate(-60 697 589.5)" />
        </clipPath>
      </defs>

      <path d="M283 207h619v607H283z" fill="url(#hatch)" />
      <path d="M286.500 210.500h613v600h-613z" fill="url(#sky)" stroke="#000" />
      {[285, 592, 900].flatMap((x) =>
        [209, 510, 812].filter((y) => x !== 592 || y !== 510).map((y) => (
          <path key={`${x}-${y}`} d={`M${x - 2} ${y - 2}h4v4h-4z`} />
        ))
      )}

      <Bracket x={549} y={282} bottom="M60 11.500L40 23v47L-11 99v110l71 20z" />
      <Bracket x={747.5} y={396.5} bottom="M60 11.500L40 23v47L-11 99v130l51 28 20.500-12z" />
      <path d="M762 622l25.500-15v46L762 640z" fill="#434343" stroke="#000" />

      {/* left shaft with its key */}
      <path d="M368 410l8-14 11-6.500 40 22-16 36z" fill="url(#shaft)" stroke="#000" />
      <path d="M362.500 411.500l4-2.500 42 24-4 12.500-42-22z" fill="#9a97a6" stroke="#000" />
      <path d="M363 412l43 24" stroke="#000" strokeWidth="2" />

      <ellipse cx="451.500" cy="449.500" rx="80.500" ry="46.500" transform="rotate(-60 451.500 449.500)" fill="url(#rim)" stroke="#000" />
      <ellipse cx="701.500" cy="592" rx="80.500" ry="46.500" transform="rotate(-60 701.500 592)" fill="#101010" stroke="#000" />
      <path
        d="M417.500 520A79 45.600 -60 0 1 496.500 383L736.500 521A79 45.600 -60 0 1 657.500 658z"
        fill="url(#body)"
        stroke="#000"
      />

      {/* front cover seen inside the sketch contour */}
      <g clipPath="url(#frontFace)">
        <path d="M630 505h140v165H630z" fill="#3a3a3a" />
        <ellipse cx="704" cy="593" rx="78" ry="44" transform="rotate(-60 704 593)" fill="#0f0f0f" stroke="#000" />
        <ellipse cx="699" cy="591" rx="79" ry="46" transform="rotate(-60 699 591)" fill="none" stroke="#000" />
      </g>
      {screws.map(([x, y]) => (
        <g key={`${x}${y}`} transform={`rotate(-60 ${x} ${y})`}>
          <ellipse cx={x} cy={y} rx="9" ry="5" fill="#5a5a5a" stroke="#222" />
          <path d={`M${x - 8} ${y}h16`} stroke="#0c0c0c" strokeWidth="2" />
        </g>
      ))}
      <path d="M690 602l16-12 46 26-14 16z" fill="#484848" />
      <ellipse cx="740" cy="620" rx="15" ry="9" transform="rotate(-60 740 620)" fill="#222" stroke="#000" />
      <path d="M708 612l6-3 20 12-2 9-24-13z" fill="#a19eae" stroke="#000" />
      <path d="M709 613l24 14" stroke="#111" />
      <path d="M748 608l30 14-12 22-28-17z" fill="url(#tube)" stroke="#000" />
      <ellipse cx="771" cy="632" rx="13" ry="7.500" transform="rotate(-60 771 632)" fill="#222" stroke="#000" />
      <ellipse cx="772" cy="632" rx="8" ry="5" transform="rotate(-60 772 632)" fill="#5c5c5c" />
      <g fill="none" stroke="#ffa850" strokeWidth="1.300">
        <ellipse cx="747.500" cy="619" rx="13" ry="7.500" transform="rotate(-60 747.500 619)" />
        <ellipse cx="771" cy="632" rx="13" ry="7.500" transform="rotate(-60 771 632)" />
        <path d="M754 607.500l24 13.500M740 630l25 14.500" />
      </g>

      {/* construction planes */}
      <g fill="none">
        <path d="M390 459.500l101-58.500 101 58.500-101 58.500z" stroke="#0090ff" />
        <path d="M541.500 372v116.500l-101 58V430z" stroke="#80ff00" />
        <path d="M440.500 489V372l101 58v119.500z" stroke="#f08078" />
        <path d="M491.500 459.500V429" stroke="#0090ff" />
        <path d="M491.500 459.500l-26.500 15" stroke="#e08040" />
        <path d="M491.500 459.500l26.500 15" stroke="#80ff00" />
      </g>

      {bolts.map((b) => <Bolt key={b[0]} b={b} head />)}
      {frontBolts.map((b) => <Bolt key={b.join()} b={b} />)}

      {[[457, 451.5], [697, 589.5]].map(([x, y]) => (
        <g key={x} fill="none" transform={`rotate(-60 ${x} ${y})`}>
          <ellipse cx={x} cy={y} rx="79" ry="45.600" stroke="#00ff20" strokeWidth="1.800" strokeDasharray={x === 457 ? "3 2" : "none"} />
          <ellipse cx={x} cy={y} rx="79" ry="45.600" stroke="#2050ff" strokeWidth="1.400" strokeDasharray="2 5" />
        </g>
      ))}

      {/* axis triad */}
      <g strokeWidth="4">
        <path d="M332 765v-12" stroke="#0078d8" />
        <path d="M332 741l4 14h-8z" fill="#0078d8" />
        <path d="M332 765l-11 6" stroke="#c00000" strokeWidth="3" />
        <path d="M310 777l7-9 4 7z" fill="#d80000" />
        <path d="M332 765l11 6" stroke="#00b000" strokeWidth="3" />
        <path d="M354 777l-11-2 4-7z" fill="#00c800" />
      </g>
      <g fontFamily="Liberation Serif" fontSize="13" textAnchor="middle">
        <text x="332" y="738" fill="#0090ff">Z</text>
        <text x="305" y="785" fill="#f00000">X</text>
        <text x="358" y="785" fill="#00d800">Y</text>
      </g>
    </svg>
  );
}

/* ---------- task bar ---------- */

const Letter = ({ children, fill = "#fff", size = 11 }) => (
  <text x="10" y="14" textAnchor="middle" fontSize={size} fontWeight="700" fill={fill}>{children}</text>
);
const wordArt = (
  <>
    <path d="M1 1h18v18H1z" fill="#f4f8fd" stroke="#2a5aa8" />
    <path d="M2 3h12v14H2z" fill="#fff" />
    <text x="10" y="16" textAnchor="middle" fontSize="16" fontWeight="800" fill="#1f62b8">W</text>
  </>
);
const utorrentArt = (
  <>
    <circle cx="10" cy="10" r="9" fill="#6cba3c" />
    <path d="M5 5l2 7c1 3 5 3 6-1l-2-6M13 11l3 2M7 12l2 6" fill="none" stroke="#fff" strokeWidth="2.500" />
  </>
);
const viberArt = (
  <>
    <path d="M10 1c7 0 8 3 8 8s-2 8-8 8l-3 3v-4c-4-1-5-3-5-7 0-5 2-8 8-8z" fill="#f4f0ff" stroke="#7a5cf0" strokeWidth="2" />
    <path d="M6 5c0 5 4 9 8 9l1-2-3-2-1 1-3-3 1-1-2-3zM11 5c3 0 4 2 4 4" fill="#7a5cf0" stroke="#7a5cf0" />
  </>
);

const tasks = [
  { name: "Сохранение", art: <><path d="M1 1h18v18H1z" fill="#1c3cc8" /><path d="M6 1h9v7H6z" fill="#ddd" /><path d="M11 2h2v5h-2z" fill="#1c3cc8" /><path d="M3 10h14v9H3z" fill="#fff" /><path d="M4 13h12M4 16h12" stroke="#e03030" strokeWidth="1.600" /></> },
  { name: "Inkscape", art: <><path d="M10 1l9 9-5 3 1 2-4 4-4-4-5-2-1-3z" fill="#151515" /><path d="M10 2l4 4-3 2-2-1-3 1z" fill="#eee" /></> },
  { name: "Параметры", art: <><circle cx="10" cy="10" r="6.500" fill="#aaa" stroke="#222" strokeWidth="1.500" /><circle cx="10" cy="10" r="8.500" fill="none" stroke="#888" strokeWidth="2.500" strokeDasharray="3 2" /><circle cx="10" cy="10" r="2.500" fill="#333" /></> },
  { name: "Монитор", art: <><path d="M4 2h15v12H4z" fill="#ddd" /><path d="M6 4h11v8H6z" fill="#0a4a20" /><path d="M6 9l3-3 3 4 2-2h3" fill="none" stroke="#2f2" /><path d="M1 7h3v10H1zM8 15h7v3H8z" fill="#c8c8c8" /></> },
  { name: "Paint", art: <><ellipse cx="9" cy="11" rx="8.500" ry="7" fill="#e8f2fc" stroke="#6a90c0" /><circle cx="5" cy="10" r="2" fill="#e33" /><circle cx="10" cy="8" r="1.500" fill="#2a2" /><circle cx="9" cy="14" r="2" fill="#27e" /><path d="M17 1v17" stroke="#f0902c" strokeWidth="3" /></> },
  { name: "Компас", open: 1, art: <><circle cx="10" cy="10" r="8.500" fill="#fff" stroke="#3a98e8" strokeWidth="3" /><Letter fill="#1c80d8" size={12}>K</Letter></> },
  { name: "Photoshop", art: <><path d="M1 1h18v17H1z" fill="#1c4fa8" /><Letter>Ps</Letter></> },
  { name: "Просмотр", art: <><circle cx="10" cy="10" r="9" fill="#c4c8c4" /><path d="M2 11c2-6 10-8 15-5-1 8-10 10-14 5" fill="#303430" /><circle cx="12" cy="10" r="3" fill="#889088" /></> },
  { name: "Рисунок", art: <><path d="M1 1h18v18H1z" fill="#f8e4e0" stroke="#c83028" strokeWidth="1.500" /><path d="M4 4h4v5H4zM11 8l5-4M6 12l3 4 6-5M12 4h4v5" fill="none" stroke="#c83028" strokeWidth="1.600" /></> },
  { name: "Telegram", art: <><circle cx="10" cy="10" r="9" fill="#179cd8" /><path d="M4 10l11-5-2 10-4-2-1 2v-3z" fill="#fff" /></> },
  { name: "Редактор", art: <><circle cx="8" cy="8" r="6" fill="#a8c820" /><path d="M2 16L15 4M2 11l8-8" stroke="#d83020" strokeWidth="2" /><path d="M18 2l-8 11M10 9l9 6" stroke="#ccc" strokeWidth="1.500" /><circle cx="15" cy="15" r="3.500" fill="none" stroke="#ddd" strokeWidth="1.500" /></> },
  { name: "FreeCAD", art: <><path d="M1 1h12v4H6v4h5v4H6v5H1z" fill="#d82818" /><circle cx="13" cy="12" r="5" fill="#2458b0" stroke="#4078d8" strokeWidth="2" strokeDasharray="2 1" /><circle cx="13" cy="12" r="2" fill="#222" /></> },
  { name: "Viber", open: 1, art: viberArt },
  { name: "Проводник", open: 1, art: <><path d="M1 2h7l2 2h9v14H1z" fill="#e8c860" /><path d="M2 6h16v7H2z" fill="#fbefb0" /><path d="M4 19v-8h12v8h-3v-5H7v5z" fill="#4aa8e8" /></> },
  { name: "Cinema", art: <><circle cx="10" cy="10" r="9" fill="#d8dce4" /><circle cx="9" cy="10" r="7" fill="#101c50" /><circle cx="11" cy="9" r="3" fill="#5888d8" /></> },
  { name: "AutoCAD", art: <><path d="M0 0h20v20H0z" fill="#f4f0f0" /><path d="M2 18L8 2h4l6 16h-4l-1-4H7l-1 4zM8 11h4l-2-6z" fill="#b8202c" /></> },
  { name: "Yandex", art: <><circle cx="10" cy="10" r="9" fill="#fff" /><Letter fill="#e82020" size={14}>Y</Letter></> },
  { name: "uTorrent", open: 1, art: utorrentArt },
  { name: "Chrome", open: 1, art: <><circle cx="10" cy="10" r="9" fill="#e04438" /><path d="M10 10L2 6a9 9 0 007 13z" fill="#34a050" /><path d="M10 10h9a9 9 0 01-10 9z" fill="#fcc830" /><circle cx="10" cy="10" r="4" fill="#4488f0" stroke="#fff" strokeWidth="1.500" /></> },
  { name: "Word", open: 1, front: 1, art: wordArt },
];

const tray = [
  <><path d="M2 1l4 2h8l4-2v10l-3 7H5l-3-7z" fill="#18a0e8" /><circle cx="7" cy="8" r="2.500" fill="#111" stroke="#fff" /><circle cx="13" cy="8" r="2.500" fill="#111" stroke="#fff" /><path d="M9 11h2l-1 3z" fill="#ffa020" /></>,
  <path d="M2 17c0-9 6-14 16-13 2 8-4 12-10 10-3-3 2-8 8-7" fill="#222" stroke="#fff" strokeWidth="2" />,
  <><path d="M4 2l6 2 9-3-1 8 2 5-8 1-2 4-4-4-6 2 3-7z" fill="#ff7410" /><Letter>a</Letter></>,
  utorrentArt,
  <path d="M10 1a3 3 0 013 5l-1 3h2v2h-2l3 5v3H5v-3l3-5H6V9h2L7 6a3 3 0 013-5z" fill="#48b820" stroke="#186008" />,
  <><circle cx="10" cy="10" r="8.500" fill="#2c90d8" /><path d="M4 6c3-3 6-2 5 1s-4 3-2 6 0 3-2 1-3-4-1-8z" fill="#80d068" /><path d="M15 7c-4-2-6 6-1 7M9 6h5" fill="none" stroke="#fff" strokeWidth="1.500" /></>,
  <><circle cx="9" cy="10" r="7.500" fill="#7a64b0" stroke="#e0d8f4" /><path d="M5 7c1 5 4 7 8 7" fill="none" stroke="#fff" strokeWidth="2" /><circle cx="15" cy="4" r="4" fill="#f01818" /></>,
  <><path d="M3 1h8v12H3zM6 13v5" fill="#8a8a8a" stroke="#444" /><circle cx="14" cy="14" r="5.500" fill="#28b028" stroke="#fff" /><path d="M11 14l2 2 4-4" fill="none" stroke="#fff" strokeWidth="1.800" /></>,
  <><path d="M1 7h4l6-6v18l-6-6H1z" fill="#d84830" stroke="#f8b0a0" /><path d="M14 6c2 2 2 6 0 8M17 3c3 4 3 10 0 14" fill="none" stroke="#d84830" /></>,
  <path d="M2 1v18M3 3h7v2h8l-2 4 2 3h-8v-2H3z" fill="#fff" stroke="#fff" strokeWidth="1.300" />,
  <path d="M1 14h2v3H1zM5 12h2v5H5zM9 9h2v8H9zM13 6h2v11h-2zM17 3h2v14h-2z" fill="#fff" />,
  <><path d="M1 7h4l5-5v16l-5-5H1z" fill="#fff" /><path d="M12 7c2 2 2 4 0 6M15 4c4 4 4 8 0 12" fill="none" stroke="#fff" strokeWidth="1.400" /></>,
  <><path d="M1 8h17v11H1z" fill="#f09010" /><path d="M5 9l7-9v3h8v5h-6" fill="#ffb820" /><path d="M9 9h2v5H9zM9 15h2v2H9z" fill="#fff" /></>,
];

const StartOrb = () => (
  <svg width="38" height="38" viewBox="0 0 38 38">
    <defs>
      <radialGradient id="orb" cx="0.500" cy="0.850" r="0.800">
        <stop offset="0" stopColor="#35d0f8" />
        <stop offset="0.500" stopColor="#17639c" />
        <stop offset="1" stopColor="#5c8ab0" />
      </radialGradient>
    </defs>
    <circle cx="19" cy="19" r="18" fill="url(#orb)" stroke="#a8c4d8" />
    <path d="M10 10c3-2 6-2 8-1l-2 8c-3-1-5-1-8 1z" fill="#f0582c" />
    <path d="M20 10c3 1 6 1 9-1l-2 8c-3 2-6 2-9 1z" fill="#8cc83c" />
    <path d="M8 20c3-2 5-2 8-1l-2 8c-3-1-5-1-8 1z" fill="#58a8f0" />
    <path d="M18 20c3 1 6 1 9-1l-2 8c-3 2-6 2-9 1z" fill="#fcc82c" />
  </svg>
);

const viewModes = [
  <path d="M3.500 2.500h13v15h-13zM6 6h8M6 9h8M6 12h8M6 15h8" fill="#fff" stroke="#555" />,
  <path d="M2 3l8 2 8-2v13l-8 2-8-2zM10 5v13M4 7l4 1M4 10l4 1M12 8l4-1M12 11l4-1" fill="#fff" stroke="#555" />,
  <><path d="M2.500 3.500h13v11h-13zM5 6h8M5 9h6" fill="#fff" stroke="#555" /><circle cx="14" cy="14" r="4" fill="#3b78b8" stroke="#285" /></>,
  <path d="M2 3h13M6 6h12M8 9h9M6 12h12M2 16h13" stroke="#777" strokeWidth="1.300" />,
  <path d="M1 3h18M1 7h18M1 11h18M1 15h18M1 19h18" stroke="#666" strokeWidth="1.300" />,
];

const menus = ["Файл", "Редактор", "Вид", "Операции", "Спецификация", "Сервис", "Окно", "Справка"];

function App() {
  return (
    <Window>
      <GlobalStyle />
      <TitleBar>
        <TitleIcon><Icon art={wordArt} size={15} /></TitleIcon>
        <Title>СПА.14112021.000 СБ - Корпус Сборочный чертеж - Microsoft Word (Сбой активации продукта)</Title>
        <WindowButtons>
          <WindowButton aria-label="Свернуть">
            <svg width="12" height="5"><path d="M0.500 0.500h11v4H0.500z" fill="#fff" stroke="#445" /></svg>
          </WindowButton>
          <WindowButton aria-label="Восстановить">
            <svg width="12" height="12"><path d="M3.500 0.500h8v8h-2v3h-9v-9h3zM3.500 5.500v3h3v-3z" fill="#fff" stroke="#445" fillRule="evenodd" /></svg>
          </WindowButton>
          <WindowButton aria-label="Закрыть" $close>
            <svg width="12" height="11"><path d="M1 1h3l2 2 2-2h3v2L8 5.500 11 8v2H8L6 8l-2 2H1V8l3-2.500L1 3z" fill="#fff" stroke="#445" /></svg>
          </WindowButton>
        </WindowButtons>
      </TitleBar>

      <MenuBar>
        {menus.map((m) => <MenuButton key={m}>{m}</MenuButton>)}
      </MenuBar>

      <ToolDock>
        <ToolLine>
          <ToolBar>
            <ShortGrip />
            <Tools items="new open save | print preview sheets | cut copy paste | brush list | undo redo | cabinet parts fx | help" />
            <Overflow $w={11} aria-label="Ещё"><More /></Overflow>
          </ToolBar>
          <ToolBar>
            <Grip />
            <Tools items="zoomPage | zoomArea zoomUp | zoomIn" />
            <ComboBox label="Масштаб" value="0.76" w={67} />
            <Tools items="| move rotate axes+ | wire1 wire2 wire3 *solid | *solidEdge | wedge | torch+ torch2+ | *section | measure | crane refresh" />
            <Overflow $gap={10} aria-label="Ещё"><More /></Overflow>
          </ToolBar>
        </ToolLine>
        <ToolLine>
          <ToolBar>
            <ShortGrip />
            <Tools items="step" />
            <ComboBox label="Шаг" value="0.10" w={61} />
            <Tools items="| layers" />
            <ComboBox label="Слой" value="" w={85} off />
            <Tools items="| frame cubePen | magnet magnet2 | parallel | grid+ | sketchOk lcs | corner *snap | xy" />
            <CoordInput aria-label="X" disabled />
            <CoordInput aria-label="Y" disabled />
            <Overflow $gap={2} $w={11} aria-label="Ещё"><More /></Overflow>
          </ToolBar>
        </ToolLine>
      </ToolDock>

      <Workspace>
        <SideDock>
          <SideBar>
            {sideSmall.map((art, i) => (
              <SmallRow key={i}>
                <DotGrip />
                <SmallButton $active={i === 0} aria-label={`Панель ${i + 1}`}><Icon art={art} size={13} /></SmallButton>
              </SmallRow>
            ))}
            <SideDivider />
            {sideLarge.map((t) => (
              <React.Fragment key={t.id}>
                <LargeButton $more={t.more} aria-label={t.id}><Icon art={t.art} size={17} /></LargeButton>
                {t.line && <SideDivider />}
              </React.Fragment>
            ))}
          </SideBar>
          <SideMore aria-label="Ещё">
            <svg width="8" height="7"><path d="M1 0v7M4 1l3 2.500L4 6z" stroke="#000" /></svg>
          </SideMore>
        </SideDock>

        <Document>
          <TabWell aria-label="Табуляция">
            <TabStop><svg width="7" height="7"><path d="M1 0v6h6" fill="none" stroke="#333" strokeWidth="2" /></svg></TabStop>
          </TabWell>
          <TopRuler><HorizontalRuler /></TopRuler>
          <LeftRuler><VerticalRuler /></LeftRuler>
          <PageHolder>
            <Page>
              <ModelFrame>
                <Model />
                <ContextMenu>
                  <li><ContextButton><u>Д</u>ерево модели</ContextButton></li>
                  <ContextLine />
                  <li><ContextButton $active><u>З</u>авершить редактирование</ContextButton></li>
                  <li><ContextButton>Отказ от <u>к</u>оманды</ContextButton></li>
                </ContextMenu>
              </ModelFrame>
            </Page>
          </PageHolder>
        </Document>

        <ScrollBar>
          <Splitter />
          <ScrollButton $framed aria-label="Линейка">
            <svg width="13" height="12"><path d="M1.500 1.500h4v3h6v5h-2v2h-4v-2h-4zM2 2l4 4M9 5l-2 3" fill="#fff" stroke="#6d6d78" /></svg>
          </ScrollButton>
          <ScrollButton aria-label="Вверх">
            <svg width="9" height="5"><path d="M0 5h9L4.500 0z" fill="#444" /></svg>
          </ScrollButton>
          <ScrollTrack>
            <ScrollThumb>
              <svg width="8" height="7"><path d="M0 0.500h8M0 3.500h8M0 6.500h8" stroke="#7b828c" /></svg>
            </ScrollThumb>
          </ScrollTrack>
          <ScrollButton aria-label="Вниз">
            <svg width="9" height="5"><path d="M0 0h9L4.500 5z" fill="#444" /></svg>
          </ScrollButton>
          <BrowseGroup>
            <ScrollButton aria-label="Предыдущая">
              <svg width="7" height="7"><path d="M0 3h7L3.500 0zM0 7h7L3.500 3z" fill="#444" /></svg>
            </ScrollButton>
            <ScrollButton aria-label="Объект">
              <svg width="8" height="8"><circle cx="4" cy="4" r="3" fill="#c4c8cc" stroke="#555" /></svg>
            </ScrollButton>
            <ScrollButton aria-label="Следующая">
              <svg width="7" height="7"><path d="M0 0h7L3.500 3zM0 4h7L3.500 7z" fill="#444" /></svg>
            </ScrollButton>
          </BrowseGroup>
        </ScrollBar>
      </Workspace>

      <PropertyDock>
        <PropertyGrip />
        <PropertyActions>
          <BareButton aria-label="Создать">
            <svg width="14" height="9"><path d="M13 0v5H5" fill="none" stroke="#000" strokeWidth="1.500" /><path d="M0 5l6-3v6z" /></svg>
          </BareButton>
          <BareButton aria-label="Прервать">
            <svg width="16" height="16">
              <path d="M5 0h6l5 5v6l-5 5H5l-5-5V5z" fill="#f00" />
              <text x="8" y="10" textAnchor="middle" fontSize="6" fontWeight="700" fill="#fff">STOP</text>
            </svg>
          </BareButton>
          <BareButton aria-label="Справка">
            <svg width="13" height="16">
              <path d="M0.500 0.500h12v12h-2v3l-3-3h-7z" fill="#bfe4ff" stroke="#000" />
              <text x="6" y="11" textAnchor="middle" fontSize="12" fontWeight="700" fill={NAVY}>?</text>
            </svg>
          </BareButton>
        </PropertyActions>
        <PropertyPanel>
          <PropertyForm>
            <NameInput aria-label="Имя" defaultValue="Операция выдавливания:1" />
            <CheckLabel>
              <Check type="checkbox" defaultChecked />
              <span>Использовать цвет <u>и</u>сточника</span>
            </CheckLabel>
            <ColorLabel>
              <span><u>Ц</u>вет</span>
              <ColorCombo $w={48} $off>
                <ComboSelect disabled><option> </option></ComboSelect>
                <svg viewBox="0 0 16 19"><path d="M5 8h6l-3 4z" fill="#888" /></svg>
              </ColorCombo>
            </ColorLabel>
            <OpticsButton type="button" disabled><u>О</u>птические свойства   &gt;&gt;</OpticsButton>
            <StateLabel>Состо<u>я</u>ние</StateLabel>
            <StateButton type="button" $active aria-label="Включить">
              <Icon size={17} art={<><path d="M1 1h11v11H1z" fill="#0000c8" /><path d="M2 5h9M2 8h9M5 3v9M8 3v9" stroke="#fff" /><path d="M8 12l3-3h6l2 3v4l-3 3h-6z" fill="#e8b048" stroke="#000" /><circle cx="12" cy="14" r="2" fill="#fff" stroke="#000" /></>} />
            </StateButton>
            <StateButton type="button" aria-label="Исключить">
              <Icon size={17} art={<><path d="M1 1l9 9M10 1l-9 9" stroke="#e00" strokeWidth="2.500" /><path d="M7 11l4-4h6l2 4v5l-3 3H8z" fill="#fff" stroke="#000" strokeWidth="1.300" /><circle cx="12" cy="14" r="2.500" fill="none" stroke="#000" /></>} />
            </StateButton>
          </PropertyForm>
          <PropertyTab>
            <Icon size={16} art={<><path d="M1 0v8M2 2l6-1 4 5" fill="none" stroke={NAVY} strokeWidth="1.500" /><path d="M5.500 8.500l3-4h6l3 4v10h-12z" fill="#fff" stroke="#000" /><path d="M7 10h2M11 10h5M7 13h2M11 13h5M7 16h2M11 16h5" stroke="#000" /></>} />
            Свойства
          </PropertyTab>
        </PropertyPanel>
      </PropertyDock>

      <StatusBar>
        <StatusItem>Страница: 1 из 1</StatusItem>
        <StatusItem>Число слов: 0</StatusItem>
        <StatusItem>
          <Icon size={16} art={<><path d="M1 12l8-4 9 3-7 7z" fill="#dfe9f8" stroke="#4468a8" /><path d="M5 8l4 5 9-12" fill="none" stroke="#3f74c8" strokeWidth="3" /></>} />
          русский
        </StatusItem>
        <ViewTools>
          {viewModes.map((art, i) => (
            <ViewButton key={i} $active={i === 0} aria-label={`Режим ${i + 1}`}><Icon art={art} size={13} /></ViewButton>
          ))}
          <ZoomText>100%</ZoomText>
          <RoundButton aria-label="Уменьшить"><svg width="8" height="8"><path d="M0 4h8" stroke="#444" strokeWidth="2" /></svg></RoundButton>
          <ZoomSlider type="range" aria-label="Масштаб страницы" defaultValue="50" />
          <RoundButton aria-label="Увеличить"><svg width="8" height="8"><path d="M0 4h8M4 0v8" stroke="#444" strokeWidth="2" /></svg></RoundButton>
        </ViewTools>
      </StatusBar>

      <TaskBar>
        <StartButton aria-label="Пуск"><StartOrb /></StartButton>
        <TaskList>
          {tasks.map((t) => (
            <TaskButton key={t.name} $open={t.open} $front={t.front} aria-label={t.name}>
              <Icon art={t.art} size={16} />
            </TaskButton>
          ))}
        </TaskList>
        <Tray>
          <TrayText>EN</TrayText>
          <TrayButton $tight aria-label="Справка">
            <Icon size={16} art={<><circle cx="10" cy="10" r="9" fill="#0818b0" stroke="#8898e0" /><Letter size={14}>?</Letter></>} />
          </TrayButton>
          <TrayButton $tight aria-label="Языковая панель">
            <svg width="9" height="18"><path d="M2.500 0.500h6v4h-6zM0.500 2.500h6v4h-6zM1 14h6l-3 3z" fill="none" stroke="#fff" /></svg>
          </TrayButton>
          {tray.map((art, i) => (
            <TrayButton key={i} aria-label={`Значок ${i + 1}`}><Icon art={art} size={16} /></TrayButton>
          ))}
          <TrayText $clock>14:18</TrayText>
          <ShowDesktop aria-label="Показать рабочий стол" />
        </Tray>
      </TaskBar>
    </Window>
  );
}

export default App;
